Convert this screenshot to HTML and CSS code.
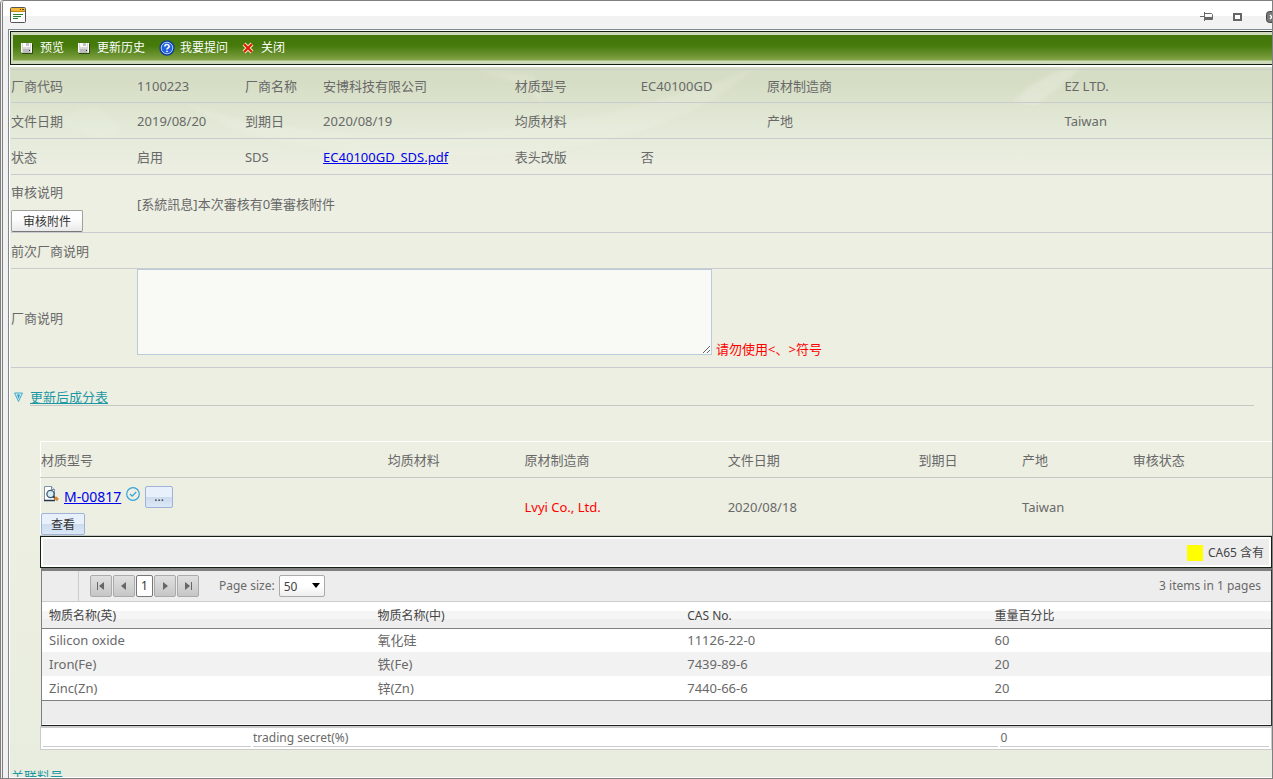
FILE: index.html
```html
<!DOCTYPE html>
<html lang="zh-CN">
<head>
<meta charset="utf-8">
<title>材质文件</title>
<link rel="stylesheet" href="styles.css">
</head>
<body>
<div class="window">
  <header class="titlebar">
    <svg class="app-icon" width="16" height="16" viewBox="0 0 16 16"><rect x=".5" y=".5" width="15" height="15" rx="1" fill="#fff" stroke="#555"/><path d="M1 1h14v3H1z" fill="#f5b935"/><path d="M1 4.500h14" stroke="#c08a1c"/><path d="M10 2.500h1M12 2.500h2" stroke="#5f4310"/><path d="M3 7.500h10M3 9.500h8M3 11.500h5" stroke="#24852b"/></svg>
    <div class="window-tools">
      <button type="button" aria-label="固定"><svg width="14" height="10" viewBox="0 0 14 10"><path d="M0 4.500h4M4.500 0v9M5 1.500h6.500l1 1v5H5" fill="none" stroke="#666"/><path d="M5 5h7v2.500H5z" fill="#666"/></svg></button>
      <button type="button" aria-label="最大化"><svg width="9" height="8" viewBox="0 0 9 8"><rect x="1" y="1" width="7" height="6" fill="#fff" stroke="#666" stroke-width="2"/></svg></button>
      <button type="button" aria-label="关闭窗口"><svg width="12" height="12" viewBox="0 0 12 12"><rect x=".5" y=".5" width="11" height="11" rx="3" fill="#777" stroke="#444"/><path d="M4 4l4 4M8 4l-4 4" stroke="#fff" stroke-width="1.500"/></svg></button>
    </div>
  </header>

  <main class="page">
    <nav class="toolbar">
      <button type="button"><svg width="12" height="12" viewBox="0 0 12 12"><path d="M0 1h11v10H1l-1-1z" fill="#d8d8d8"/><path d="M0 1h1v9H0zM10 1h1v9h-1z" fill="#fff"/><path d="M2 1h7v4H2z" fill="#fafafa"/><path d="M2 7h7v4H2z" fill="#bbb"/><path d="M5 1h3v3H5z" fill="#c4c4c4"/><path d="M8 8h1v1H8z" fill="#333"/><path d="M11.500 2v9.500H1" fill="none" stroke="#2c4710"/></svg>预览</button>
      <button type="button"><svg width="12" height="12" viewBox="0 0 12 12"><path d="M0 1h11v10H1l-1-1z" fill="#d8d8d8"/><path d="M0 1h1v9H0zM10 1h1v9h-1z" fill="#fff"/><path d="M2 1h7v4H2z" fill="#fafafa"/><path d="M2 7h7v4H2z" fill="#bbb"/><path d="M5 1h3v3H5z" fill="#c4c4c4"/><path d="M8 8h1v1H8z" fill="#333"/><path d="M11.500 2v9.500H1" fill="none" stroke="#2c4710"/></svg>更新历史</button>
      <button type="button"><svg class="help-icon" width="16" height="16" viewBox="0 0 16 16"><circle cx="8" cy="8" r="7" fill="#2463dc" stroke="#163f91" stroke-width="1.500"/><circle cx="8" cy="8" r="5.800" fill="none" stroke="#a9c9ff"/><path d="M5.800 6.500q.2-2 2.200-2t2.200 1.800q0 1.100-1.200 1.700-1 .5-1 1.500M8 10.700v1.300" fill="none" stroke="#fff" stroke-width="1.600"/></svg>我要提问</button>
      <button type="button"><svg width="12" height="12" viewBox="0 0 12 12"><path d="M2 2l8 8M10 2l-8 8" stroke="#fff0b8" stroke-width="4"/><path d="M2 2l8 8M10 2l-8 8" stroke="#d91c0b" stroke-width="2.200"/></svg>关闭</button>
    </nav>

    <svg class="brush" width="1100" height="110" viewBox="0 0 1100 110"><g fill="#f3f5ea"><path d="M150 35c120 45 360 50 570-34-70 68-200 94-340 88C290 85 200 75 150 35z" opacity=".2"/><path d="M440 2l60 6 10 30-22-20z" opacity=".2"/><path d="M980 34c20-22 46-34 72-38-18 20-38 32-50 42z" opacity=".3"/><path d="M20 52l40-14 30 22-20 16z" opacity=".15"/></g></svg>

    <table class="info">
      <colgroup><col class="c-a"><col class="c-b"><col class="c-c"><col class="c-d"><col class="c-a"><col class="c-a"><col class="c-e"><col></colgroup>
      <tr><td>厂商代码</td><td>1100223</td><td>厂商名称</td><td>安博科技有限公司</td><td>材质型号</td><td>EC40100GD</td><td>原材制造商</td><td>EZ LTD.</td></tr>
      <tr><td>文件日期</td><td>2019/08/20</td><td>到期日</td><td>2020/08/19</td><td>均质材料</td><td></td><td>产地</td><td>Taiwan</td></tr>
      <tr><td>状态</td><td>启用</td><td>SDS</td><td><a href="#">EC40100GD_SDS.pdf</a></td><td>表头改版</td><td>否</td><td></td><td></td></tr>
      <tr class="review"><td><div>审核说明</div><button type="button" class="btn">审核附件</button></td><td colspan="7">[系統訊息]本次審核有0筆審核附件</td></tr>
      <tr><td>前次厂商说明</td><td colspan="7"></td></tr>
      <tr class="note"><td><label for="note">厂商说明</label></td><td colspan="7"><div class="note-box"><textarea id="note"></textarea><span class="warn">请勿使用&lt;、&gt;符号</span></div></td></tr>
    </table>

    <div class="section">
      <svg width="9" height="10" viewBox="0 0 9 10"><path d="M.5 1h8L4.500 9.500z" fill="#c9ecf7" stroke="#49a9c6"/><path d="M3 2.500h3L4.500 7z" fill="#319dbe"/></svg>
      <h2>更新后成分表</h2>
    </div>

    <section class="parts">
      <table class="material">
        <colgroup><col class="m-a"><col class="m-b"><col class="m-c"><col class="m-d"><col class="m-e"><col class="m-f"><col></colgroup>
        <tr><th>材质型号</th><th>均质材料</th><th>原材制造商</th><th>文件日期</th><th>到期日</th><th>产地</th><th>审核状态</th></tr>
        <tr><td>
          <div class="item">
            <svg class="view-icon" width="16" height="16" viewBox="0 0 16 16"><path d="M1.500.5h7l3 3v11h-10z" fill="#fff" stroke="#8293a8"/><path d="M8.500.5v3h3" fill="#dfe7f0" stroke="#71859c"/><path d="M1 14.500h11" stroke="#26364d" stroke-width="1.500"/><circle cx="7.500" cy="8" r="3.600" fill="#d8edf2" stroke="#405b72" stroke-width="1.300"/><path d="M10 10.500l2 1.500" stroke="#34414f" stroke-width="2"/><path d="M12 11.500l3 2.500" stroke="#d9892b" stroke-width="3"/></svg>
            <a href="#">M-00817</a>
            <svg class="ok-icon" width="14" height="14" viewBox="0 0 14 14"><circle cx="7" cy="7" r="6.300" fill="none" stroke="#35a2dc" stroke-width="1.200"/><path d="M4 7l2.200 2.200L10.200 5" fill="none" stroke="#35a2dc" stroke-width="1.200"/></svg>
            <button type="button" class="btn blue dots">...</button>
          </div>
          <button type="button" class="btn blue">查看</button>
        </td><td></td><td class="warn">Lvyi Co., Ltd.</td><td>2020/08/18</td><td></td><td>Taiwan</td><td></td></tr>
      </table>

      <div class="legend"><div><i></i>CA65 含有</div></div>

      <div class="grid">
        <div class="pager">
          <div class="pages">
            <button type="button" aria-label="首页"><svg width="10" height="10" viewBox="0 0 10 10"><path d="M1.500 1v8" stroke="#666"/><path d="M8 1v8L3 5z" fill="#666"/></svg></button>
            <button type="button" aria-label="上一页"><svg width="10" height="10" viewBox="0 0 10 10"><path d="M7 1v8L2 5z" fill="#666"/></svg></button>
            <button type="button" class="current">1</button>
            <button type="button" aria-label="下一页"><svg width="10" height="10" viewBox="0 0 10 10"><path d="M3 1v8l5-4z" fill="#666"/></svg></button>
            <button type="button" aria-label="末页"><svg width="10" height="10" viewBox="0 0 10 10"><path d="M8.500 1v8" stroke="#666"/><path d="M2 1v8l5-4z" fill="#666"/></svg></button>
          </div>
          <label for="size">Page size:</label>
          <div class="pick"><select id="size"><option>50</option></select><svg width="8" height="5" viewBox="0 0 8 5"><path d="M0 0h8L4 5z" fill="#000"/></svg></div>
          <span class="total">3 items in 1 pages</span>
        </div>
        <table class="rows">
          <colgroup><col class="g-a"><col class="g-b"><col class="g-c"><col></colgroup>
          <thead><tr><th>物质名称(英)</th><th>物质名称(中)</th><th>CAS No.</th><th>重量百分比</th></tr></thead>
          <tbody>
            <tr><td>Silicon oxide</td><td>氧化硅</td><td>11126-22-0</td><td>60</td></tr>
            <tr><td>Iron(Fe)</td><td>铁(Fe)</td><td>7439-89-6</td><td>20</td></tr>
            <tr><td>Zinc(Zn)</td><td>锌(Zn)</td><td>7440-66-6</td><td>20</td></tr>
          </tbody>
        </table>
        <div class="grid-foot"></div>
      </div>

      <table class="secret">
        <colgroup><col class="s-a"><col class="s-b"><col></colgroup>
        <tr><td></td><td>trading secret(%)</td><td>0</td></tr>
      </table>
    </section>

    <a href="#" class="related">关联料号</a>
  </main>
</div>
</body>
</html>
```
FILE: styles.css
```css
* { box-sizing: border-box; }

body {
  margin: 0;
  font: 13px/18px "Noto Sans", "Noto Sans CJK SC", sans-serif;
  color: #696969;
  background: #f1f1f1;
}

button, select, textarea { font: inherit; }
svg { display: block; flex: none; }
a { color: #00e; }

.window {
  display: flex;
  flex-direction: column;
  height: 100vh;
  overflow: hidden;
  padding-left: 6px;
  border: 1px solid #808080;
  border-left: 3px double #808080;
  border-radius: 4px 0 0 0;
}

.titlebar {
  display: flex;
  flex: none;
  justify-content: space-between;
  height: 29px;
  margin-left: -6px;
  padding: 6px 0 0 7px;
  background: linear-gradient(#fff 15px, #f2f2f2 15px);
  overflow: hidden;
}

.window-tools {
  display: flex;
  align-items: center;
  gap: 19px;
  height: 20px;
  margin-right: -6px;
}

.window-tools button {
  padding: 0;
  border: 0;
  background: none;
}

.window-tools button:last-child { margin-left: 5px; }

.page {
  position: relative;
  flex: 1;
  min-height: 0;
  overflow: hidden;
  padding-left: 1px;
  border: solid #fff;
  border-width: 1px 0 1px 1px;
  outline: 1px solid #7f8992;
  background: linear-gradient(#d2dac0, #d5ddc4 50px, #e3e9d7 95px, #edefe3 145px, #edefe3 420px, #e9eddf 720px);
}

.brush { position: absolute; left: 24px; top: 36px; filter: blur(2px); }

/* Toolbar */
.toolbar {
  position: relative;
  z-index: 1;
  display: flex;
  align-items: center;
  height: 34px;
  margin: 0 -3px 0 -1px;
  padding: 3px 3px 3px 6px;
  gap: 14px;
  border: 1px solid #142010;
  box-shadow: 0 2px #fff, inset 0 0 0 2px #ced9bb;
  background: linear-gradient(#ced9bb 3px, #43750a 3px, #467b0c 14px, #6b9230 23px, #83a545 28px, #d1dcbd 29px);
}

.toolbar button {
  display: flex;
  align-items: center;
  gap: 7px;
  padding: 0;
  border: 0;
  background: none;
  color: #fff;
  font-size: 12px;
}

.toolbar button:first-child { padding-left: 4px; }
.toolbar .help-icon { margin-right: -2px; }

/* Document details */
table {
  width: 100%;
  table-layout: fixed;
  border-collapse: collapse;
}

th { font-weight: normal; text-align: left; }
td, th { padding: 0; }

.info { position: relative; margin-top: 4px; border-top: 1px solid #ccc; }
.info td { height: 36px; border-bottom: 1px solid #c9ccce; }
.info tr:first-child td { height: 33px; }
.c-a { width: 10%; }
.c-b { width: 8.55%; }
.c-c { width: 6.2%; }
.c-d { width: 15.2%; }
.c-e { width: 23.6%; }
.info .review td { height: 58px; }
.review div { padding: 8px 0 9px; }

.btn {
  display: block;
  height: 22px;
  padding: 1px 11px 0;
  border: 1px solid #a0a0a0;
  border-bottom-color: #777;
  border-radius: 2px;
  background: linear-gradient(#fdfdfd 40%, #e9e9e9);
  color: #333;
  font-size: 12px;
  line-height: 20px;
}

.btn.blue {
  padding: 1px 9px 0;
  border-color: #9fb3d6;
  background: linear-gradient(#e8f0fb 50%, #ccdbee 50%, #dce8f7);
}

.info .note td { height: 99px; }
.note-box { display: flex; align-items: flex-end; gap: 4px; height: 98px; padding-bottom: 12px; }

.note-box textarea {
  width: 575px;
  height: 86px;
  border: 1px solid #bccbdc;
  background: rgba(255, 255, 255, .65);
}

.warn { color: #f00; }
.note-box .warn { line-height: 11px; }

/* Section heading */
.section {
  display: flex;
  align-items: center;
  gap: 7px;
  margin: 20px 18px 0 3px;
}

.section h2 {
  flex: 1;
  height: 18px;
  margin: 0;
  border-bottom: 1px solid #c5c9c5;
  color: #1c98a4;
  font-size: 13px;
  font-weight: normal;
  line-height: 18px;
  text-decoration: underline;
}

.parts { margin: 35px 0 0 29px; }

.material {
  border-top: 1px solid #fff;
  border-left: 1px solid #fff;
}

.material th { height: 36px; border-bottom: 1px solid #c5c9c5; }
.material td { height: 58px; border-bottom: 1px solid #c5c9c5; }
.m-a { width: 28.2%; }
.m-b { width: 11.1%; }
.m-c { width: 16.5%; }
.m-d { width: 15.5%; }
.m-e { width: 8.4%; }
.m-f { width: 9%; }

.item { display: flex; align-items: center; gap: 5px; height: 35px; padding: 3px 0 0 2px; }
.item a { font-size: 14px; }
.item svg { margin-bottom: 7px; }
.btn.dots { padding: 0 8px; }

/* Legend */
.legend {
  display: flex;
  height: 32px;
  padding: 2px;
  border: 1px solid #142010;
  background: #fff;
}

.legend div {
  display: flex;
  flex: 1;
  align-items: center;
  justify-content: flex-end;
  gap: 5px;
  padding: 1px 5px 0 0;
  background: #ededed;
  color: #444;
  font-size: 12px;
}

.legend i { width: 16px; height: 16px; background: #ff0; }

/* Composition grid */
.grid {
  margin-left: 1px;
  border: 1px solid #808080;
  border-top-width: 3px;
  border-right-color: #333;
  border-bottom-color: #222;
}

.pager {
  display: flex;
  align-items: center;
  height: 31px;
  padding: 0 10px 0 1px;
  border-bottom: 1px solid #ccc;
  background: #ededed;
  font-size: 12px;
}

.pages {
  display: flex;
  align-items: center;
  gap: 1px;
  height: 30px;
  margin-left: 35px;
  margin-right: 20px;
  padding-left: 11px;
  border-left: 1px solid #ccc;
}

.pages button {
  display: flex;
  align-items: center;
  justify-content: center;
  width: 22px;
  height: 22px;
  padding: 0;
  border: 1px solid #aaa;
  border-radius: 2px;
  background: linear-gradient(#e0e0e0, #c6c6c6);
}

.pages .current { width: 17px; border-color: #777; background: #fff; color: #333; }
.pick { position: relative; margin-left: 4px; }

.pick select {
  display: block;
  width: 46px;
  height: 22px;
  padding: 2px 4px 0;
  border: 1px solid #aaa;
  border-radius: 2px;
  background: linear-gradient(#fff 50%, #eee);
  color: #444;
  appearance: none;
}

.pick svg { position: absolute; right: 5px; top: 8px; pointer-events: none; }
.total { margin-left: auto; }

.g-a { width: 27.3%; }
.g-b { width: 25.2%; }
.g-c { width: 25%; }

.rows th {
  height: 26px;
  padding: 2px 0 0 7px;
  border-bottom: 1px solid #808080;
  background: linear-gradient(#fff 9px, #f5f5f5 9px, #f5f5f5 17px, #eee 17px);
  color: #444;
  font-size: 12px;
}

.rows td { height: 24px; padding: 0 0 1px 7px; background: #fff; }
.rows th + th, .rows td + td { padding-left: 0; }
.rows tr:nth-child(even) td { background: #f2f2f2; }

.grid-foot {
  height: 25px;
  border-top: 1px solid #808080;
  border-bottom: 1px solid #fff;
  background: #ededed;
}

.secret {
  border: 1px solid #ccc;
  border-top-width: 2px;
  border-collapse: separate;
  border-spacing: 2px 0;
  padding-bottom: 2px;
  background: #fff;
  font-size: 12px;
  line-height: 16px;
}

.secret td { height: 19px; padding-top: 2px; border-bottom: 1px solid #ccc; }
.s-a { width: 208px; }
.s-b { width: 61%; }

.related { display: block; margin-top: 17px; color: #1c98a4; }
```
